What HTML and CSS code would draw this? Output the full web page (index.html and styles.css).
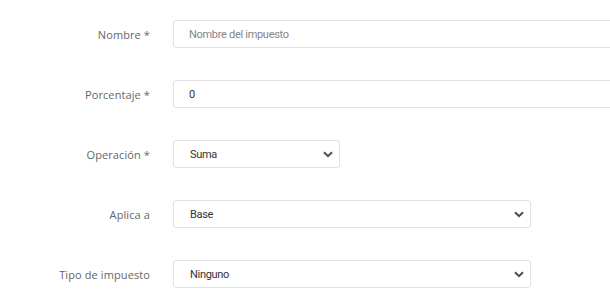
FILE: index.html
```html
<!DOCTYPE html>
<html lang="es">
<head>
<meta charset="utf-8">
<link rel="stylesheet" href="styles.css">
</head>
<body>
<form class="form">
  <div class="row">
    <label class="label" for="nombre">Nombre *</label>
    <input class="control control-wide" id="nombre" type="text" placeholder="Nombre del impuesto">
  </div>
  <div class="row">
    <label class="label" for="porc">Porcentaje *</label>
    <input class="control control-wide" id="porc" type="text" value="0">
  </div>
  <div class="row">
    <label class="label" for="op">Operación *</label>
    <div class="select select-sm">
      <select class="control" id="op"><option>Suma</option></select>
      <svg class="chev" viewBox="0 0 10 7" width="10" height="7"><path d="M1 1.2 L5 5.2 L9 1.2" fill="none" stroke="#4d4d4d" stroke-width="2"/></svg>
    </div>
  </div>
  <div class="row">
    <label class="label" for="aplica">Aplica a</label>
    <div class="select select-md">
      <select class="control" id="aplica"><option>Base</option></select>
      <svg class="chev" viewBox="0 0 10 7" width="10" height="7"><path d="M1 1.2 L5 5.2 L9 1.2" fill="none" stroke="#4d4d4d" stroke-width="2"/></svg>
    </div>
  </div>
  <div class="row">
    <label class="label" for="tipo">Tipo de impuesto</label>
    <div class="select select-md">
      <select class="control" id="tipo"><option>Ninguno</option></select>
      <svg class="chev" viewBox="0 0 10 7" width="10" height="7"><path d="M1 1.2 L5 5.2 L9 1.2" fill="none" stroke="#4d4d4d" stroke-width="2"/></svg>
    </div>
  </div>
</form>
</body>
</html>
```
FILE: styles.css
```css
html, body {
  margin: 0;
  padding: 0;
  background: #fff;
  overflow: hidden;
}
.form {
  display: flex;
  flex-direction: column;
  gap: 32px;
  padding-top: 20px;
  width: 640px;
}
.row {
  display: grid;
  grid-template-columns: 150px auto;
  column-gap: 23px;
  align-items: center;
  height: 28px;
}
.label {
  text-align: right;
  font-family: "Open Sans", sans-serif;
  font-size: 11px;
  color: #666;
  letter-spacing: 0.1px;
}
.control {
  box-sizing: border-box;
  height: 28px;
  border: 1px solid #e3e3e6;
  border-radius: 3px;
  padding: 0 15px;
  font-family: Roboto, "Liberation Sans", Arial, sans-serif;
  font-size: 11px;
  letter-spacing: -0.3px;
  color: #333;
  background: #fff;
  outline: none;
}
.control::placeholder {
  color: #858585;
}
.control-wide {
  width: 460px;
}
.select {
  position: relative;
  height: 28px;
}
.select select {
  width: 100%;
  appearance: none;
  -webkit-appearance: none;
  padding-left: 16px;
}
.select-sm { width: 167px; }
.select-md { width: 358px; }
.chev {
  position: absolute;
  right: 7px;
  top: 11px;
  pointer-events: none;
}
```
